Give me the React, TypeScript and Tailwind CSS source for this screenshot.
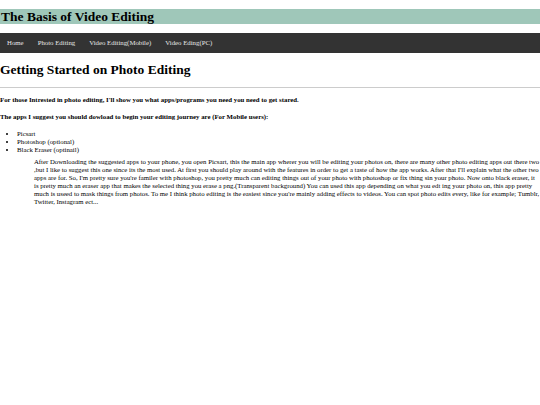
const links = ["Home", "Photo Editing", "Video Editing(Mobile)", "Video Eding(PC)"];

export default function App() {
	return (
		<div className="min-h-[405px] bg-white pt-[9px] font-['Liberation_Serif','Times_New_Roman',serif] text-black">
			<h1 className="h-[15px] bg-[#9fc7b9] pl-px text-[13.5px] font-bold leading-[15px]">
				The Basis of Video Editing
			</h1>

			<nav className="mt-[9px] flex h-[20px] items-center bg-[#333333] px-0">
				{links.map((l) => (
					<a
						key={l}
						href="#"
						className="px-[7px] text-[6.8px] leading-[8px] text-[#e6e6e6]"
					>
						{l}
					</a>
				))}
			</nav>

			<h2 className="mt-[9px] text-[13.5px] font-bold leading-[16px]">
				Getting Started on Photo Editing
			</h2>

			<hr className="mt-[9px] border-t border-[#cccccc]" />

			<p className="mt-[8px] text-[6.8px] font-bold leading-[8px]">
				For those Intrested in photo editing, I'll show you what apps/programs you need you need to get stared.
			</p>
			<p className="mt-[9px] text-[6.8px] font-bold leading-[8px]">
				The apps I suggest you should dowload to begin your editing journey are (For Mobile users):
			</p>

			<ul className="mt-[9px] list-disc pl-[17px] text-[6.8px] leading-[8px]">
				<li>Picsart</li>
				<li>Photoshop (optional)</li>
				<li>Black Eraser (optinail)</li>
			</ul>

			<p className="mt-[4px] pl-[34px] text-[6.765px] leading-[8px]">
				After Downloading the suggested apps to your phone, you open Picsart, this the main app wherer you will be editing your photos on, there are many other photo editing apps out there two ,but I like to suggest this one since its the most used. At first you should play around with the features in order to get a taste of how the app works. After that I'll explain what the other two apps are for. So, I'm pretty sure you're familer with photoshop, you pretty much can editing things out of your photo with photoshop or fix thing sin your photo. Now onto black eraser, it is pretty much an eraser app that makes the selected thing you erase a png.(Transparent background) You can used this app depending on what you edt ing your photo on, this app pretty much is useed to mask things from photos. To me I think photo editing is the easiest since you're mainly adding effects to videos. You can spot photo edits every, like for example; Tumblr, Twitter, Instagram ect...
			</p>
		</div>
	);
}
